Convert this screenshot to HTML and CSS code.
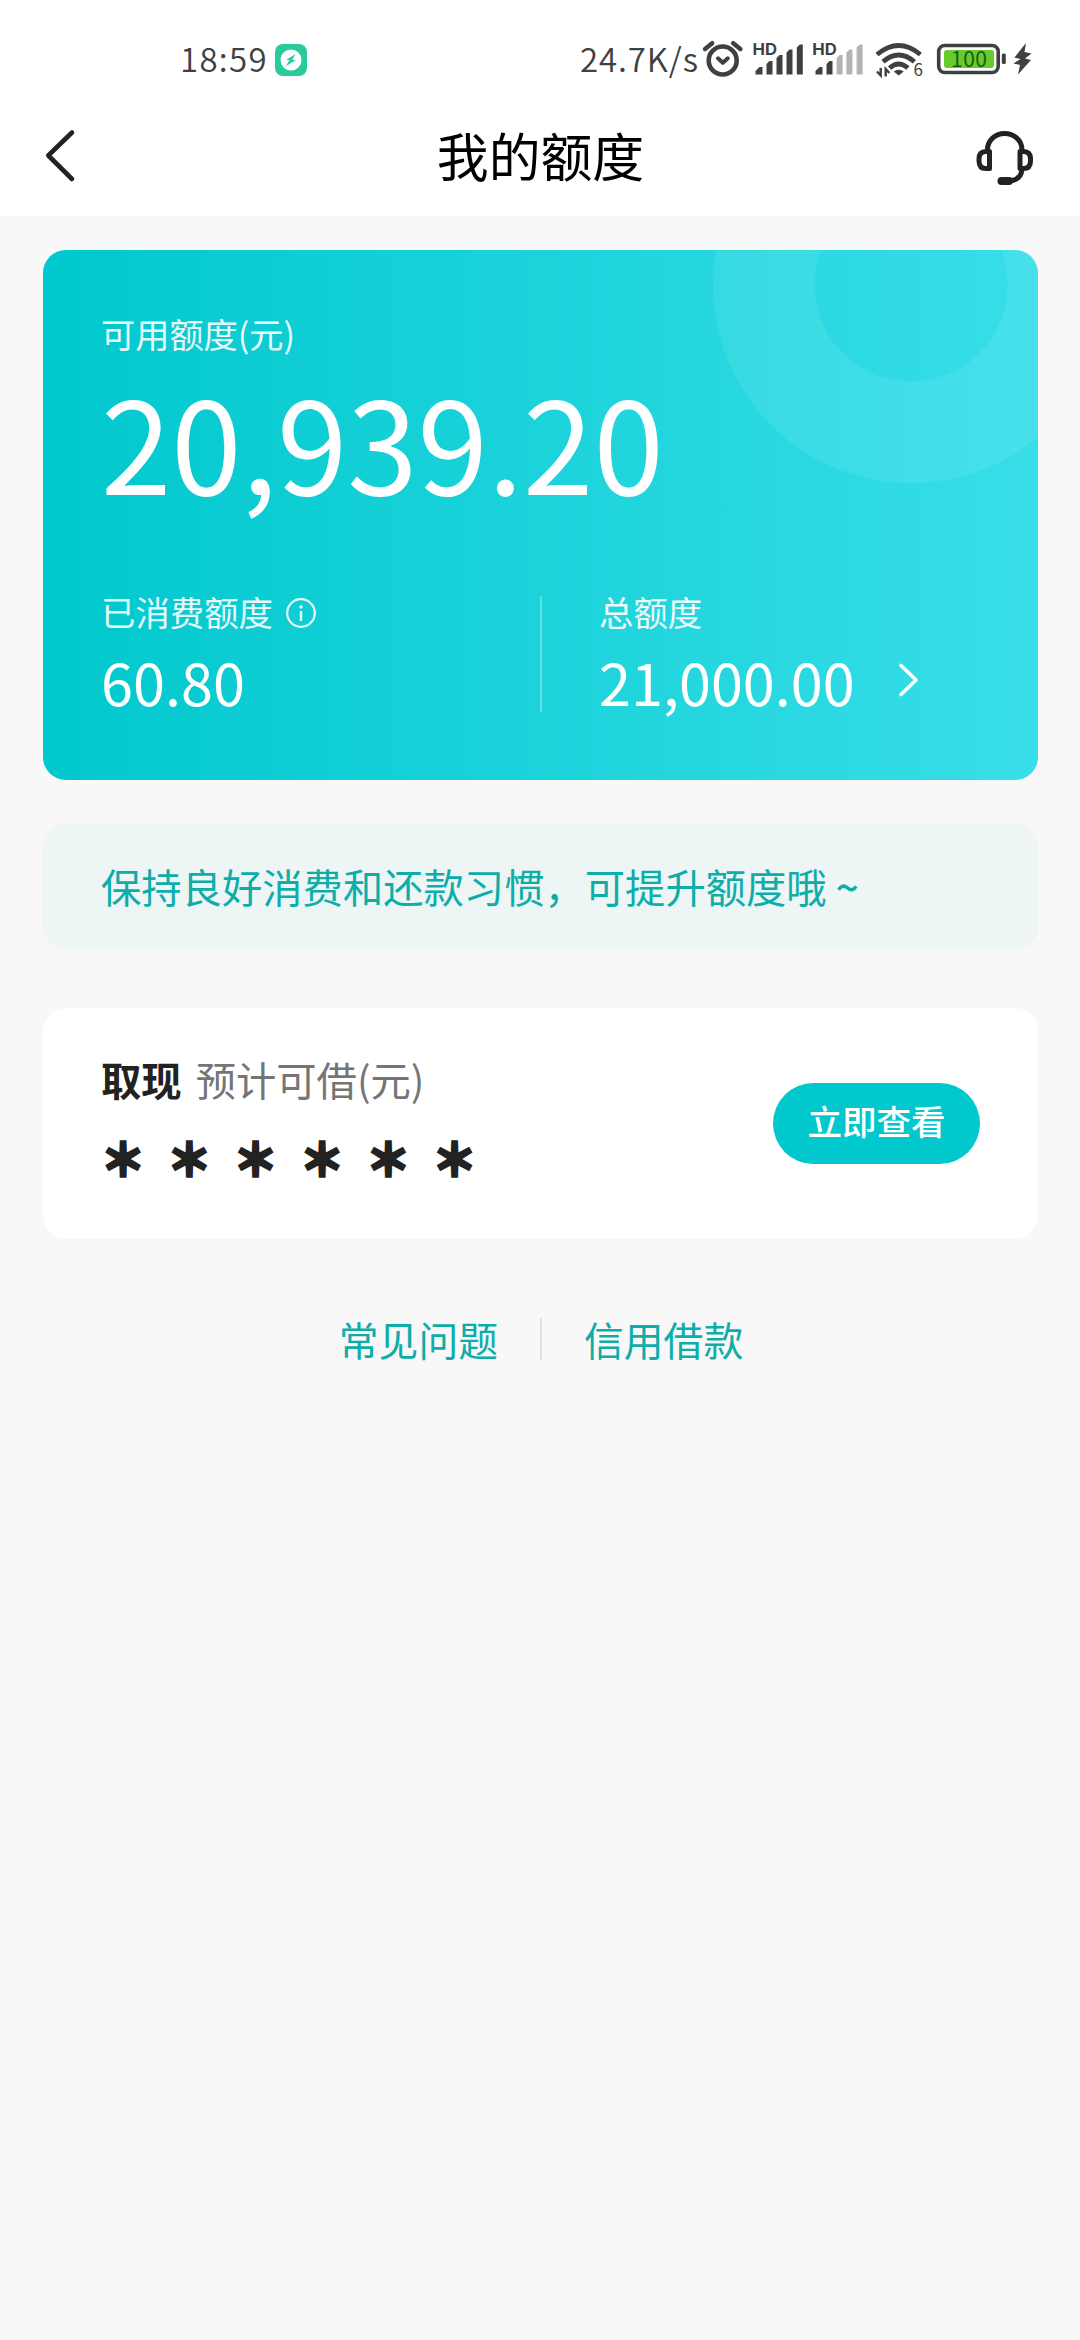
FILE: index.html
```html
<!DOCTYPE html>
<html lang="zh-CN">
<head>
<meta charset="utf-8">
<title>我的额度</title>
<link rel="stylesheet" href="styles.css">
</head>
<body>
<header class="top">
  <div class="status">
    <span class="time">18:59</span>
    <svg class="app-badge" width="32" height="32" viewBox="0 0 32 32"><rect width="32" height="32" rx="8" fill="#28cb9b"/><circle cx="16" cy="16" r="10.500" fill="#fff"/><path d="M20.500 10l-9.500 6h3.500l-3.500 6 10-6h-3.800z" fill="#28cb9b"/></svg>
    <span class="speed">24.7K/s</span>
    <svg class="status-icons" width="340" height="40" viewBox="700 40 340 40">
      <g fill="none" stroke="#404040" stroke-linecap="round" stroke-linejoin="round">
        <circle cx="722.700" cy="60.500" r="14" stroke-width="4.600"/>
        <path d="M705 49l7.200-5.800M740.400 49l-7.200-5.800" stroke-width="4.400"/>
        <path d="M718 58.300l4.800 4.500 5-4.500" stroke-width="4"/>
      </g>
      <g class="hd"><text x="752.500" y="55.200" textLength="24.500" lengthAdjust="spacingAndGlyphs">HD</text><text x="812.300" y="55.200" textLength="24.500" lengthAdjust="spacingAndGlyphs">HD</text></g>
      <g fill="#404040">
        <path d="M755.500 74.500v-3.500l4-4h3v7.500zM766.500 74.500v-10.500l3-3h3v13.500zM776.500 74.500v-16.500l3-3h3v19.500zM786.500 74.500v-22l3-3h3v25zM796.800 74.500v-27l3-3h3v30z"/>
        <path d="M815.500 74.500v-3.500l4-4h3v7.500zM826.500 74.500v-10.500l3-3h3v13.500z"/>
      </g>
      <path d="M836.600 74.500v-16.500l3-3h3v19.500zM846.400 74.500v-22l3-3h3v25zM856.600 74.500v-27l3-3h3v30z" fill="#b4b4b4"/>
      <g fill="none" stroke="#404040" stroke-width="4.800">
        <path d="M877 54.500q21.700-18 43.400 0M883 61.700q15.700-13.500 31.400 0M889.500 68q9.200-8 18.400 0"/>
      </g>
      <path d="M893.700 71.500q5-3.500 10 0l-5 4z" fill="#404040"/>
      <path d="M880.700 68v7.500l-3.700-4M885.700 76.500v-7.500l3.700 4" fill="none" stroke="#404040" stroke-width="2.400"/>
      <text class="gen" x="913.500" y="76">6</text>
      <rect x="938.700" y="45.500" width="59.500" height="27" rx="6" fill="#fff" stroke="#404040" stroke-width="3.600"/>
      <rect x="944" y="50" width="50" height="18" rx="3" fill="#67cb2b"/>
      <text class="level" x="951" y="66.700" textLength="36">100</text>
      <rect x="1001.800" y="53.500" width="4" height="10.500" rx="1.500" fill="#404040"/>
      <path d="M1026 43l-11.500 14.500 6 1.500-7 4.500 6.500 1.500-2 9.500 13-14.500-6-1.500 6.500-5-7-1.500z" fill="#404040"/>
    </svg>
  </div>
  <nav class="nav">
    <svg width="64" height="64" viewBox="28 124 64 64"><path d="M72 132.500L48.300 155.500 72 179" fill="none" stroke="#222" stroke-width="4.600" stroke-linecap="round" stroke-linejoin="round"/></svg>
    <h1 class="title">我的额度</h1>
    <svg width="64" height="64" viewBox="972 124 64 64">
      <g fill="none" stroke="#222" stroke-width="5" stroke-linejoin="round" stroke-linecap="round">
        <path d="M986.500 149.500a17.200 16 0 0 1 34.400 0M988.500 151.500v17h-3.500q-7 0-7-7.500v-2q0-7.500 7-7.500zM1019 151.500v17h3.500q7 0 7-7.500v-2q0-7.500-7-7.500zM1021 169.500q-1 9.500-10 11"/>
        <path d="M1000.500 181h7.500" stroke-width="8"/>
      </g>
    </svg>
  </nav>
</header>
<main class="page">
  <section class="credit">
    <div class="label first">可用额度(元)</div>
    <div class="amount">20,939.20</div>
    <div class="split">
      <div class="part">
        <div class="label">已消费额度<svg class="info" width="32" height="32" viewBox="0 0 32 32"><circle cx="16" cy="16" r="13.800" fill="none" stroke="#fff" stroke-width="2.200"/><path d="M16 14v10" stroke="#fff" stroke-width="2.400"/><circle cx="16" cy="10" r="1.700" fill="#fff"/></svg></div>
        <div class="value">60.80</div>
      </div>
      <div class="part total">
        <div class="label">总额度</div>
        <div class="value">21,000.00<svg class="more" width="24" height="40" viewBox="0 0 24 40"><path d="M4 5.500L19 20 4 34.500" fill="none" stroke="#fff" stroke-width="3.600" stroke-linecap="round" stroke-linejoin="round"/></svg></div>
      </div>
    </div>
  </section>
  <p class="tip">保持良好消费和还款习惯，可提升额度哦 <span class="tilde">~</span></p>
  <section class="cash">
    <div>
      <div class="cash-title"><b>取现</b><span>预计可借(元)</span></div>
      <div class="stars">＊＊＊＊＊＊</div>
    </div>
    <button class="check">立即查看</button>
  </section>
  <div class="links"><a>常见问题</a><i class="bar"></i><a>信用借款</a></div>
</main>
</body>
</html>
```
FILE: styles.css
```css
* { box-sizing: border-box; }
body {
  margin: 0;
  min-height: 2340px;
  background: #f8f8f8;
  font-family: "Noto Sans CJK SC", sans-serif;
  color: #222;
}
svg { display: block; flex: none; }
.top { height: 216px; background: #fff; }
.status {
  display: flex;
  align-items: center;
  height: 120px;
  padding-left: 180px;
  font-size: 33px;
  font-weight: 350;
  color: #404040;
  white-space: nowrap;
}
.time, .speed { padding-bottom: 5px; }
.time { width: 95px; letter-spacing: 1.3px; }
.speed { width: 119px; margin-left: 273px; letter-spacing: .9px; }
.status-icons { margin-left: 1px; }
.hd { font: 700 16px "Inter", sans-serif; fill: #404040; }
.gen { font: 400 17px "Noto Sans CJK SC", sans-serif; fill: #404040; }
.level { font: 400 21px "Noto Sans CJK SC", sans-serif; fill: #1d5a10; }
.nav {
  display: flex;
  justify-content: space-between;
  height: 68px;
  padding: 4px 43px 0 28px;
}
.title {
  margin: 1px 0 0 16px;
  font-size: 51.84px;
  font-weight: 400;
  line-height: 60px;
  color: #000;
}
.page { padding: 34px 42px 0 43px; }
.credit {
  height: 530px;
  padding: 58px 58px 0;
  border-radius: 23px;
  color: #fff;
  background:
    radial-gradient(circle at 868px 35px, transparent 96px, rgba(255,255,255,.08) 97px, rgba(255,255,255,.08) 197.500px, transparent 198.500px),
    linear-gradient(90deg, #00c8cd, #38dee8);
}
.label {
  display: flex;
  align-items: center;
  height: 50px;
  font-size: 34.4px;
  line-height: 50px;
  opacity: .9;
}
.first { font-size: 34.2px; }
.amount {
  height: 127px;
  margin-top: 18px;
  font-size: 126.72px;
  line-height: 127px;
}
.split { display: flex; margin-top: 83px; }
.part { width: 439px; }
.total { position: relative; padding-left: 59px; }
.total::before {
  content: "";
  position: absolute;
  left: 0;
  top: 10px;
  width: 2px;
  height: 116px;
  background: rgba(255,255,255,.3);
}
.info { margin: 4px 0 0 12px; }
.value {
  display: flex;
  align-items: center;
  height: 66px;
  margin-top: 12px;
  font-size: 57.6px;
  line-height: 66px;
}
.more { margin: -2px 0 0 42px; }
.tip {
  height: 125px;
  margin: 44px 0 0;
  padding-left: 58px;
  border-radius: 23px;
  background: #edf5f5;
  font-size: 40.32px;
  line-height: 124px;
  color: #0dada9;
}
.tilde { font-weight: 500; }
.cash {
  display: flex;
  justify-content: space-between;
  height: 231px;
  margin-top: 59px;
  padding: 41px 58px 0;
  border-radius: 23px;
  background: #fff;
}
.cash-title {
  display: flex;
  gap: 14px;
  font-size: 40.32px;
  line-height: 59px;
}
.cash-title span { color: #757575; }
.stars {
  margin-top: 9px;
  font-size: 44px;
  font-weight: 700;
  line-height: 80px;
  letter-spacing: 22.300px;
  -webkit-text-stroke: 3.400px #222;
}
.check {
  width: 207px;
  height: 81px;
  margin-top: 34px;
  padding: 0 0 6px;
  border: 0;
  border-radius: 41px;
  background: #00c8cd;
  color: #fff;
  font: 500 34.56px/75px "Noto Sans CJK SC", sans-serif;
}
.links {
  display: flex;
  justify-content: center;
  align-items: center;
  gap: 42px;
  height: 60px;
  margin-top: 70px;
  padding-left: 1px;
  font-size: 39.8px;
  line-height: 60px;
  color: #0dada9;
}
.bar { width: 2px; height: 42px; background: #e2e2e2; }
```
